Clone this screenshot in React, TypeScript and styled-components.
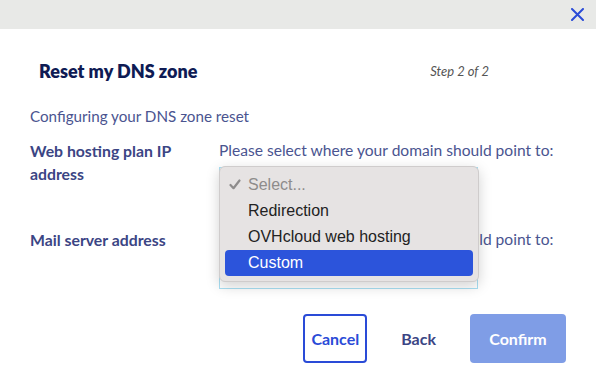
import React from "react";
import styled, { createGlobalStyle } from "styled-components";

const Global = createGlobalStyle`
  html, body { margin: 0; padding: 0; background: #fff; }
  body { font-family: Lato, "Open Sans", sans-serif; }
`;

const TopBar = styled.div`
  height: 29px;
  background: #e8e9e7;
  display: flex;
  justify-content: flex-end;
  align-items: center;
  padding-right: 12px;
`;

const CloseBtn = styled.button`
  border: none;
  background: none;
  padding: 0;
  display: flex;
  color: #2a4bd7;
  cursor: pointer;
`;

const Body = styled.div`
  padding: 0 30px;
`;

const Header = styled.div`
  display: flex;
  justify-content: space-between;
  align-items: center;
  padding: 29px 77px 0 9px;
  height: 26px;
`;

const Title = styled.h2`
  margin: 0;
  font-size: 18px;
  font-weight: 800;
  color: #0f1b54;
`;

const Step = styled.span`
  font-style: italic;
  font-size: 13px;
  color: #555;
`;

const Desc = styled.p`
  margin: 22px 0 0;
  font-size: 15.2px;
  color: #4a5490;
  line-height: 20px;
`;

const Form = styled.div`
  margin-top: 13px;
  display: grid;
  grid-template-columns: 189px 259px;
  row-gap: 28px;
`;

const Label = styled.div`
  font-size: 15.8px;
  font-weight: 700;
  color: #3b4584;
  line-height: 23px;
  padding-right: 20px;
`;

const Field = styled.div`
  display: flex;
  flex-direction: column;
  gap: 5px;
  position: relative;
`;

const Hint = styled.div`
  font-size: 15.6px;
  color: #4a5490;
  line-height: 23px;
  white-space: nowrap;
`;

const SelectBox = styled.div`
  height: 33px;
  border: 1px solid #a9dff3;
  box-sizing: border-box;
  width: 259px;
`;

const Menu = styled.div`
  position: absolute;
  left: 0;
  top: 27px;
  width: 260px;
  box-sizing: border-box;
  background: #e6e3e3;
  border: 1px solid #cfcccc;
  border-radius: 6px;
  box-shadow: 0 4px 14px rgba(0, 0, 0, 0.18);
  padding: 5px 5px;
  z-index: 2;
  font-family: "Liberation Sans", Arial, sans-serif;
`;

const Option = styled.div<{ $active?: boolean; $muted?: boolean }>`
  height: 26px;
  display: flex;
  align-items: center;
  padding-left: 23px;
  font-size: 16px;
  border-radius: 4px;
  position: relative;
  color: ${(p) => (p.$active ? "#fff" : p.$muted ? "#8e8c8c" : "#222")};
  background: ${(p) => (p.$active ? "#2c54db" : "transparent")};
`;

const Check = styled.span`
  position: absolute;
  left: 4px;
  top: 7px;
  display: flex;
  color: #8e8c8c;
`;

const Actions = styled.div`
  display: flex;
  justify-content: flex-end;
  align-items: center;
  gap: 32px;
  margin-top: 25px;
`;

const Button = styled.button<{ $variant: "outline" | "ghost" | "primary" }>`
  font-family: Lato, "Open Sans", sans-serif;
  font-weight: 700;
  font-size: 16px;
  height: 49px;
  border-radius: 4px;
  cursor: pointer;
  padding: 0 ${(p) => (p.$variant === "primary" ? "16px" : p.$variant === "outline" ? "6px" : "0")};
  border: 2px solid ${(p) => (p.$variant === "outline" ? "#2a4bd7" : "transparent")};
  background: ${(p) => (p.$variant === "primary" ? "#7f9de6" : "transparent")};
  color: ${(p) =>
    p.$variant === "primary" ? "#fff" : p.$variant === "outline" ? "#2a4bd7" : "#3b4584"};
  min-width: ${(p) => (p.$variant === "primary" ? "96px" : "auto")};
`;

const hint = "Please select where your domain should point to:";

export default function App() {
  return (
    <>
      <Global />
      <TopBar>
        <CloseBtn aria-label="close">
          <svg width="13" height="13" viewBox="0 0 13 13">
            <path d="M1 1L12 12M12 1L1 12" stroke="currentColor" strokeWidth="2" strokeLinecap="round" />
          </svg>
        </CloseBtn>
      </TopBar>
      <Body>
        <Header>
          <Title>Reset my DNS zone</Title>
          <Step>Step 2 of 2</Step>
        </Header>
        <Desc>Configuring your DNS zone reset</Desc>
        <Form>
          <Label>Web hosting plan IP address</Label>
          <Field>
            <Hint>{hint}</Hint>
            <SelectBox />
            <Menu>
              <Option $muted>
                <Check>
                  <svg width="12" height="11" viewBox="0 0 12 11">
                    <path d="M1.5 6L4.5 9.2L10.5 1.5" fill="none" stroke="currentColor" strokeWidth="2.2" strokeLinecap="round" strokeLinejoin="round" />
                  </svg>
                </Check>
                Select...
              </Option>
              <Option>Redirection</Option>
              <Option>OVHcloud web hosting</Option>
              <Option $active>Custom</Option>
            </Menu>
          </Field>
          <Label>Mail server address</Label>
          <Field>
            <Hint>{hint}</Hint>
            <SelectBox />
          </Field>
        </Form>
        <Actions>
          <Button $variant="outline">Cancel</Button>
          <Button $variant="ghost">Back</Button>
          <Button $variant="primary">Confirm</Button>
        </Actions>
      </Body>
    </>
  );
}
